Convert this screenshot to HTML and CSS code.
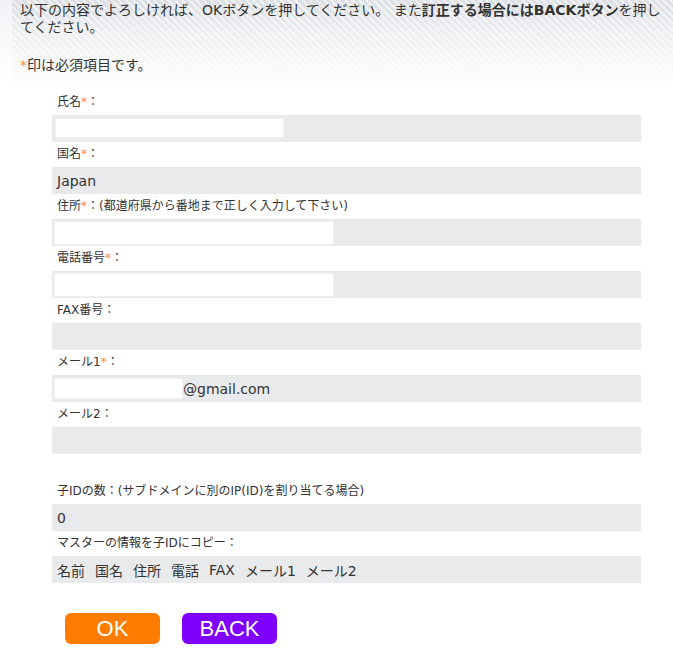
FILE: index.html
```html
<!DOCTYPE html>
<html lang="ja">
<head>
<meta charset="utf-8">
<title>確認</title>
<link rel="stylesheet" href="styles.css">
</head>
<body>
<div class="page">
  <div class="notice">
    <p class="lead">以下の内容でよろしければ、OKボタンを押してください。 また<b>訂正する場合にはBACKボタン</b>を押し<br>てください。</p>
    <p class="req"><span class="ast">*</span>印は必須項目です。</p>
  </div>

  <div class="form">
    <div class="field">
      <div class="label">氏名<span class="ast">*</span>：</div>
      <div class="value"><span class="box box-name"></span></div>
    </div>
    <div class="field">
      <div class="label">国名<span class="ast">*</span>：</div>
      <div class="value">Japan</div>
    </div>
    <div class="field">
      <div class="label">住所<span class="ast">*</span>：(都道府県から番地まで正しく入力して下さい)</div>
      <div class="value"><span class="box box-wide"></span></div>
    </div>
    <div class="field">
      <div class="label">電話番号<span class="ast">*</span>：</div>
      <div class="value"><span class="box box-wide"></span></div>
    </div>
    <div class="field">
      <div class="label">FAX番号：</div>
      <div class="value"></div>
    </div>
    <div class="field">
      <div class="label">メール1<span class="ast">*</span>：</div>
      <div class="value"><span class="box box-mail"></span>@gmail.com</div>
    </div>
    <div class="field">
      <div class="label">メール2：</div>
      <div class="value"></div>
    </div>

    <div class="field field-sub">
      <div class="label">子IDの数：(サブドメインに別のIP(ID)を割り当てる場合)</div>
      <div class="value">0</div>
    </div>
    <div class="field">
      <div class="label">マスターの情報を子IDにコピー：</div>
      <div class="value items">
        <span>名前</span><span>国名</span><span>住所</span><span>電話</span><span>FAX</span><span>メール1</span><span>メール2</span>
      </div>
    </div>

    <div class="actions">
      <button class="btn btn-ok" type="button">OK</button>
      <button class="btn btn-back" type="button">BACK</button>
    </div>
  </div>
</div>
</body>
</html>
```

FILE: styles.css
```css
html, body {
  margin: 0;
  padding: 0;
}
body {
  background: linear-gradient(to bottom, #f1f2f4 0, #ffffff 80px) no-repeat;
  font-family: "DejaVu Sans", "Noto Sans CJK JP", sans-serif;
  color: #333;
  width: 673px;
  min-height: 649px;
}
.page {
  width: 673px;
}
.notice {
  margin-left: 12px;
  height: 90px;
  box-sizing: border-box;
  padding: 2px 2px 0 8px;
  background:
    repeating-linear-gradient(45deg, rgba(255,255,255,0) 0, rgba(255,255,255,0) 3px, rgba(255,255,255,0.55) 3px, rgba(255,255,255,0.55) 5px),
    linear-gradient(to bottom, #dcdfe3 0%, #eceef0 35%, #f8f8f9 70%, #ffffff 100%);
  font-size: 14px;
  line-height: 17px;
}
.notice p {
  margin: 0;
}
.notice b {
  font-weight: 700;
}
.notice .req {
  margin-top: 21px;
}
.ast {
  color: #ff8a1f;
}
.form {
  margin-left: 52px;
  width: 589px;
}
.label {
  height: 25px;
  line-height: 25px;
  padding-left: 5px;
  font-size: 12px;
  color: #333;
  white-space: nowrap;
}
.value {
  height: 27px;
  box-sizing: border-box;
  background: #e9eaec;
  padding-left: 5px;
  font-size: 14px;
  color: #333;
  display: flex;
  align-items: center;
}
.box {
  display: block;
  background: #fff;
  border: 1px solid #f1f1f2;
  box-sizing: border-box;
}
.box-name {
  width: 229px;
  height: 20px;
  margin-left: -2px;
  margin-top: -1px;
}
.box-wide {
  width: 280px;
  height: 24px;
  margin-left: -3px;
}
.box-mail {
  width: 129px;
  height: 21px;
  margin-left: -3px;
}
.field-sub {
  margin-top: 25px;
}
.items {
  gap: 10px;
}
.actions {
  margin-top: 30px;
  padding-left: 13px;
  display: flex;
  gap: 22px;
}
.btn {
  width: 95px;
  height: 31px;
  border: none;
  border-radius: 6px;
  color: #fff;
  font-family: "Liberation Sans", Arial, sans-serif;
  font-size: 22px;
  line-height: 31px;
  padding: 0;
  text-align: center;
}
.btn-ok {
  background: #ff7c00;
}
.btn-back {
  background: #8000ff;
}
```
